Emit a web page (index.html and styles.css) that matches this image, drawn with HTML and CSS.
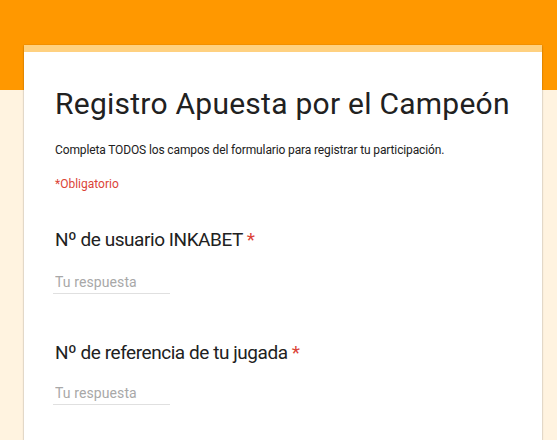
FILE: index.html
```html
<!DOCTYPE html>
<html lang="es">
<head>
<meta charset="utf-8">
<title>Registro Apuesta por el Campeón</title>
<link rel="stylesheet" href="styles.css">
</head>
<body>
<main class="page">
  <form class="card">
    <h1 class="title">Registro Apuesta por el Campeón</h1>
    <p class="desc">Completa TODOS los campos del formulario para registrar tu participación.</p>
    <p class="required-note">*Obligatorio</p>
    <div class="question q-first">
      <label class="q-label">Nº de usuario INKABET <span class="star">*</span></label>
      <input class="answer" type="text" placeholder="Tu respuesta">
    </div>
    <div class="question q-second">
      <label class="q-label">Nº de referencia de tu jugada <span class="star">*</span></label>
      <input class="answer" type="text" placeholder="Tu respuesta">
    </div>
  </form>
</main>
</body>
</html>
```

FILE: styles.css
```css
html, body {
  margin: 0;
  padding: 0;
  height: 100%;
}
body {
  background: linear-gradient(#ff9800 0, #ff9800 90px, #fff3e0 90px, #fff3e0 100%);
  font-family: Roboto, "Liberation Sans", sans-serif;
  color: #202124;
  overflow: hidden;
}
.page {
  box-sizing: border-box;
  height: 100%;
  display: flex;
  flex-direction: column;
  padding: 45px 15px 0 24px;
}
.card {
  flex: 1;
  background: #fff;
  border-top: 7px solid #ffd180;
  box-shadow: 0 1px 2px rgba(0,0,0,0.25), 0 0 1px rgba(0,0,0,0.2);
  padding: 34px 31px 0 31px;
}
.title {
  margin: 0;
  font-size: 30px;
  line-height: 36px;
  font-weight: 400;
  letter-spacing: 0.25px;
  color: #212121;
}
.desc {
  margin: 20px 0 0;
  font-size: 12px;
  line-height: 16px;
  letter-spacing: -0.13px;
  color: #212121;
}
.required-note {
  margin: 18px 0 0;
  font-size: 12px;
  line-height: 16px;
  color: #db4437;
}
.question {
  display: flex;
  flex-direction: column;
  align-items: flex-start;
}
.q-first {
  margin-top: 36px;
}
.q-second {
  margin-top: 47px;
}
.q-label {
  font-size: 19px;
  line-height: 24px;
  letter-spacing: -0.45px;
  color: #212121;
}
.star {
  color: #db4437;
}
.answer {
  margin-top: 22px;
  margin-left: -2px;
  width: 117px;
  box-sizing: border-box;
  height: 20px;
  padding: 0 0 3px 2px;
  border: none;
  border-bottom: 1px solid #e0e0e0;
  font-family: Roboto, "Liberation Sans", sans-serif;
  font-size: 14px;
  line-height: 16px;
  letter-spacing: 0.1px;
  color: #212121;
  outline: none;
  background: transparent;
}
.q-second .answer {
  margin-top: 20px;
}
.answer::placeholder {
  color: #a8a8a8;
}
```
